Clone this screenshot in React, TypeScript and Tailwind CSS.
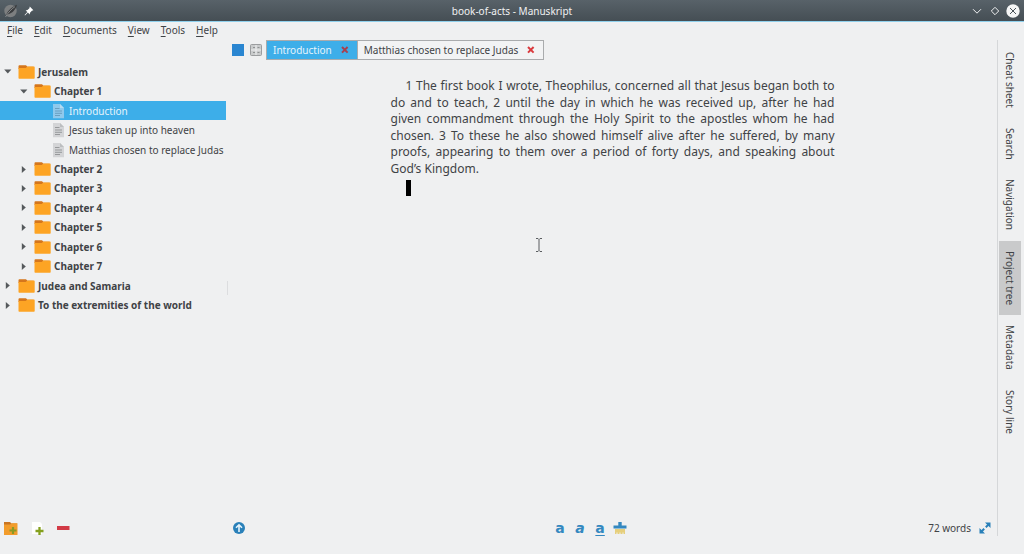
import { useState } from "react";
import clsx from "clsx";

type TreeItem = {
  title: string;
  level: 0 | 1 | 2;
  kind: "folder" | "text";
  open?: boolean;
}

const items: TreeItem[] = [
  { title: "Jerusalem", level: 0, kind: "folder", open: true },
  { title: "Chapter 1", level: 1, kind: "folder", open: true },
  { title: "Introduction", level: 2, kind: "text" },
  { title: "Jesus taken up into heaven", level: 2, kind: "text" },
  { title: "Matthias chosen to replace Judas", level: 2, kind: "text" },
  { title: "Chapter 2", level: 1, kind: "folder" },
  { title: "Chapter 3", level: 1, kind: "folder" },
  { title: "Chapter 4", level: 1, kind: "folder" },
  { title: "Chapter 5", level: 1, kind: "folder" },
  { title: "Chapter 6", level: 1, kind: "folder" },
  { title: "Chapter 7", level: 1, kind: "folder" },
  { title: "Judea and Samaria", level: 0, kind: "folder" },
  { title: "To the extremities of the world", level: 0, kind: "folder" },
];

const menus = ["File", "Edit", "Documents", "View", "Tools", "Help"];
const docks = ["Cheat sheet", "Search", "Navigation", "Project tree", "Metadata", "Story line"];
const indents = ["pl-[3px]", "pl-[19px]", "pl-[51px]"];

const FolderIcon = () => (
  <svg viewBox="0 0 17 14" className="h-[14px] w-[17px] shrink-0">
    <path d="M0.5 4V1.2Q0.5 0.3 1.4 0.3H8L9.5 1.8H15.5V4Z" fill="#d5761c" />
    <path d="M0.5 3H7.6L9.6 1.6H16Q16.7 1.6 16.7 2.3V13Q16.7 13.8 16 13.8H1.2Q0.5 13.8 0.5 13Z" fill="#fda424" />
  </svg>
);

const TextIcon = ({ selected }: { selected: boolean }) => (
  <svg viewBox="0 0 14 16" className={clsx("h-4 w-[14px] shrink-0", selected ? "text-[#8fc9ec]" : "text-[#d3d4d6]")}>
    <path d="M2 1H9L13 5V15.3H2Z" fill="currentColor" />
    <path d="M9 1L13 5H9Z" fill={selected ? "#b5dbf2" : "#bcbec0"} />
    <path d="M4 5.5H8.5M4 8H11M4 10.3H11M4 12.5H9" stroke={selected ? "#6a9fc0" : "#97999b"} />
  </svg>
);

const Arrow = ({ open }: { open?: boolean }) => (
  <svg viewBox="0 0 9 9" className="size-[9px] shrink-0 fill-[#55595c]">
    {open ? <path d="M1.2 2.5H8.4L4.8 6.4Z" /> : <path d="M2.8 1V8L6.8 4.5Z" />}
  </svg>
);

const TitleBar = () => (
  <header className="flex h-[22px] shrink-0 items-center border-b border-[#8fd0ec] bg-linear-to-b from-[#586269] to-[#454e54] text-[#f0f1f2]">
    <div className="flex flex-1 items-center gap-[6px] pl-1">
      <svg viewBox="0 0 14 14" className="size-[14px]">
        <circle cx="6.5" cy="7" r="6.2" fill="#7d7f80" />
        <path d="M1.5 12.5C3 8 7 3 13 0.8C12 5.5 8 9.5 4.2 10.3Z" fill="#3b3d3f" />
        <path d="M1.5 13C4 8.5 7.5 5 11 2.6" fill="none" stroke="#a3a5a6" strokeWidth="0.7" />
      </svg>
      <button aria-label="Keep above">
        <svg viewBox="0 0 10 10" className="size-[10px]">
          <path d="M5.8 0.6L9.4 4.2L7.9 4.7L6 6.7L5.7 8.4L3.9 6.6L1 9.4L0.6 9L3.4 6.1L1.7 4.4L3.5 4.1L5.4 2.2Z" fill="#fff" />
        </svg>
      </button>
    </div>
    <h1>book-of-acts - Manuskript</h1>
    <div className="flex flex-1 items-center justify-end gap-[4px] pr-[4px]">
      <button aria-label="Minimize">
        <svg viewBox="0 0 14 14" className="size-[14px]">
          <path d="M3 5.2L7 9.2L11 5.2" fill="none" stroke="currentColor" />
        </svg>
      </button>
      <button aria-label="Maximize">
        <svg viewBox="0 0 14 14" className="size-[14px]">
          <path d="M7 3.3L10.7 7L7 10.7L3.3 7Z" fill="none" stroke="currentColor" />
        </svg>
      </button>
      <button aria-label="Close">
        <svg viewBox="0 0 14 14" className="size-[14px]">
          <circle cx="7" cy="7" r="6.7" fill="#f5f6f6" />
          <path d="M4 4L10 10M10 4L4 10" stroke="#4a5359" />
        </svg>
      </button>
    </div>
  </header>
);

const ProjectTree = () => {
  const [selected, setSelected] = useState("Introduction");

  return (
    <aside className="flex w-[226px] shrink-0 flex-col pt-[22px]">
      <ul className="grid h-[253px] auto-rows-fr">
        {items.map((item) => (
          <li key={item.title} className="flex">
            <button
              onClick={() => setSelected(item.title)}
              className={clsx(
                "flex w-full items-center whitespace-nowrap",
                indents[item.level],
                item.kind === "folder" && "font-bold",
                selected === item.title && "bg-[#3daee9] text-[#e6f4fc]"
              )}
            >
              {item.kind === "folder" && <Arrow open={item.open} />}
              <span className={clsx("flex", item.kind === "folder" ? "mr-[3px] ml-[6px]" : "mr-1")}>
                {item.kind === "folder" ? <FolderIcon /> : <TextIcon selected={selected === item.title} />}
              </span>
              {item.title}
            </button>
          </li>
        ))}
      </ul>

      <div className="mt-auto flex h-[34px] items-start gap-[9px] pl-1">
        <button aria-label="Add folder">
          <svg viewBox="0 0 16 16" className="size-4">
            <path d="M0 5V2H6L7.5 3.5H13V5Z" fill="#c97522" />
            <path d="M0 4.6H6L8 3.3H13.5V15H0Z" fill="#f29c2b" />
            <path d="M9 7V14M5.5 10.5H12.5" stroke="#8b9a23" strokeWidth="2.2" />
          </svg>
        </button>
        <button aria-label="Add text">
          <svg viewBox="0 0 16 16" className="size-4">
            <path d="M3 2H11L13 4V14H3Z" fill="#fff" />
            <path d="M10.5 7V15M6.5 11H14.5" stroke="#84a01e" strokeWidth="2.3" />
          </svg>
        </button>
        <button aria-label="Remove">
          <svg viewBox="0 0 16 16" className="size-4">
            <path d="M3 6H15.5V10H3Z" fill="#d23a46" />
          </svg>
        </button>
      </div>
    </aside>
  );
}

type TabProps = {
  title: string;
  active: boolean;
  onSelect: () => void;
}

const EditorTab = ({ title, active, onSelect }: TabProps) => (
  <div className={clsx("flex items-center gap-2 pr-[7px] pl-[6px]", active ? "bg-[#3daee9] text-[#e6f4fc]" : "border-l border-[#a9abad] bg-[#f2f3f4]")}>
    <button onClick={onSelect}>{title}</button>
    <button aria-label={`Close ${title}`}>
      <svg viewBox="0 0 10 10" className="size-[10px]">
        <path d="M2 2L7.6 7.6M7.6 2L2 7.6" stroke={active ? "#a8404f" : "#da3a3e"} strokeWidth="2" />
      </svg>
    </button>
  </div>
);

const Editor = () => {
  const [tab, setTab] = useState(0);

  return (
    <main className="relative flex min-w-0 flex-1 flex-col">
      <div className="flex h-5 items-stretch">
        <div className="flex items-center gap-[6px] pr-[4px] pl-[4px]">
          <button aria-label="Root colour" className="size-3 bg-[#2a86d1]" />
          <button aria-label="Split view">
            <svg viewBox="0 0 12 12" className="size-3">
              <rect x="0.5" y="0.5" width="11" height="11" rx="1" fill="#c9cbcc" stroke="#9b9d9f" />
              <path d="M1 6H11M6 1V11" stroke="#eff0f1" />
              <path d="M3 3.5H5M7.5 3.5H9.5M3 8.5H5M7.5 8.5H9.5" stroke="#8e9193" />
            </svg>
          </button>
        </div>
        <div className="flex border border-[#a9abad]">
          {["Introduction", "Matthias chosen to replace Judas"].map((title, i) => (
            <EditorTab key={title} title={title} active={tab === i} onSelect={() => setTab(i)} />
          ))}
        </div>
      </div>

      <div
        role="textbox"
        aria-label="Scene text"
        aria-multiline="true"
        className="mx-auto mt-[18px] w-full max-w-[444px] text-justify indent-[15px] text-[12px] leading-snug"
      >
        <p>
          1 The first book I wrote, Theophilus, concerned all that Jesus began both to do and to teach, 2 until the day
          in which he was received up, after he had given commandment through the Holy Spirit to the apostles whom he had
          chosen. 3 To these he also showed himself alive after he suffered, by many proofs, appearing to them over a
          period of forty days, and speaking about God’s Kingdom.
        </p>
        <p className="flex pt-[3px] pl-[15px]">
          <span className="h-4 w-[5px] bg-black" />
        </p>
      </div>

      {/* Mouse pointer */}
      <svg viewBox="0 0 8 14" className="absolute top-[198px] left-[307px] h-[14px] w-2">
        <path d="M1 0.5H3L4 1.5L5 0.5H7M4 1.5V12.5M1 13.5H3L4 12.5L5 13.5H7" fill="none" stroke="#5a5d60" />
      </svg>

      <div className="mt-auto flex h-[34px] items-start justify-between pr-[5px] pl-[4px]">
        <button aria-label="Go to parent" className="flex h-4 w-5 items-center">
          <svg viewBox="0 0 14 14" className="size-[14px]">
            <circle cx="7" cy="7" r="6" fill="#2980b9" />
            <path d="M7 11V4M4 6.8L7 3.8L10 6.8" fill="none" stroke="#e7f4fc" strokeWidth="1.6" />
          </svg>
        </button>
        <div className="flex h-4 items-center gap-[6px] font-['DejaVu_Sans',sans-serif] text-[14px] leading-4 text-[#3488c0]">
          <button aria-label="Bold" className="w-[14px] font-bold">a</button>
          <button aria-label="Italic" className="w-[14px] font-bold italic">a</button>
          <button aria-label="Underline" className="w-[14px] font-bold underline underline-offset-2">a</button>
          <button aria-label="Clear format">
            <svg viewBox="0 0 14 14" className="size-[14px]">
              <path d="M5.3 1H8.7V4.5H13.5V7.5H0.5V4.5H5.3Z" fill="#3488c0" />
              <path d="M2 8H12V13H10.5V11.5H9.5V13H7.5V11.5H6.5V13H4.5V11.5H3.5V13H2Z" fill="#e6cf7c" />
            </svg>
          </button>
        </div>
        <div className="flex h-4 items-center gap-[7px]">
          <span>72 words</span>
          <button aria-label="Fullscreen">
            <svg viewBox="0 0 14 14" className="size-[14px]">
              <path d="M7 1.5H12.5V7ZM1.5 7V12.5H7Z" fill="#2980b9" />
              <path d="M7.8 6.2L11 3M3 11L6.2 7.8" stroke="#2980b9" strokeWidth="2" />
            </svg>
          </button>
        </div>
      </div>
    </main>
  );
}

const App = () => {
  const [dock, setDock] = useState("Project tree");

  return (
    <div className="flex min-h-screen flex-col bg-[#eff0f1] font-['Noto_Sans',sans-serif] text-[10px] leading-4 text-[#3f4346]">
      <TitleBar />

      <nav className="flex h-[18px] items-start gap-[11px] pl-[7px]">
        {menus.map((menu) => (
          <button key={menu}>
            <span className="underline underline-offset-2">{menu[0]}</span>{menu.slice(1)}
          </button>
        ))}
      </nav>

      <div className="flex flex-1">
        <ProjectTree />
        <div className="flex w-[2px] items-center justify-end pb-[18px]">
          <span className="h-[14px] w-px bg-[#dcdddf]" />
        </div>
        <Editor />
        <div className="mb-[18px] w-px bg-[#d5d7d9]" />
        <nav className="flex w-[26px] shrink-0 flex-col items-start pt-[2px] pl-[1px]">
          {docks.map((name) => (
            <button
              key={name}
              onClick={() => setDock(name)}
              className={clsx("w-[22px] pt-[10px] pb-[10px] leading-[22px] [writing-mode:vertical-rl]", dock === name && "bg-[#c9cacb]")}
            >
              {name}
            </button>
          ))}
        </nav>
      </div>
    </div>
  );
}

export default App;
